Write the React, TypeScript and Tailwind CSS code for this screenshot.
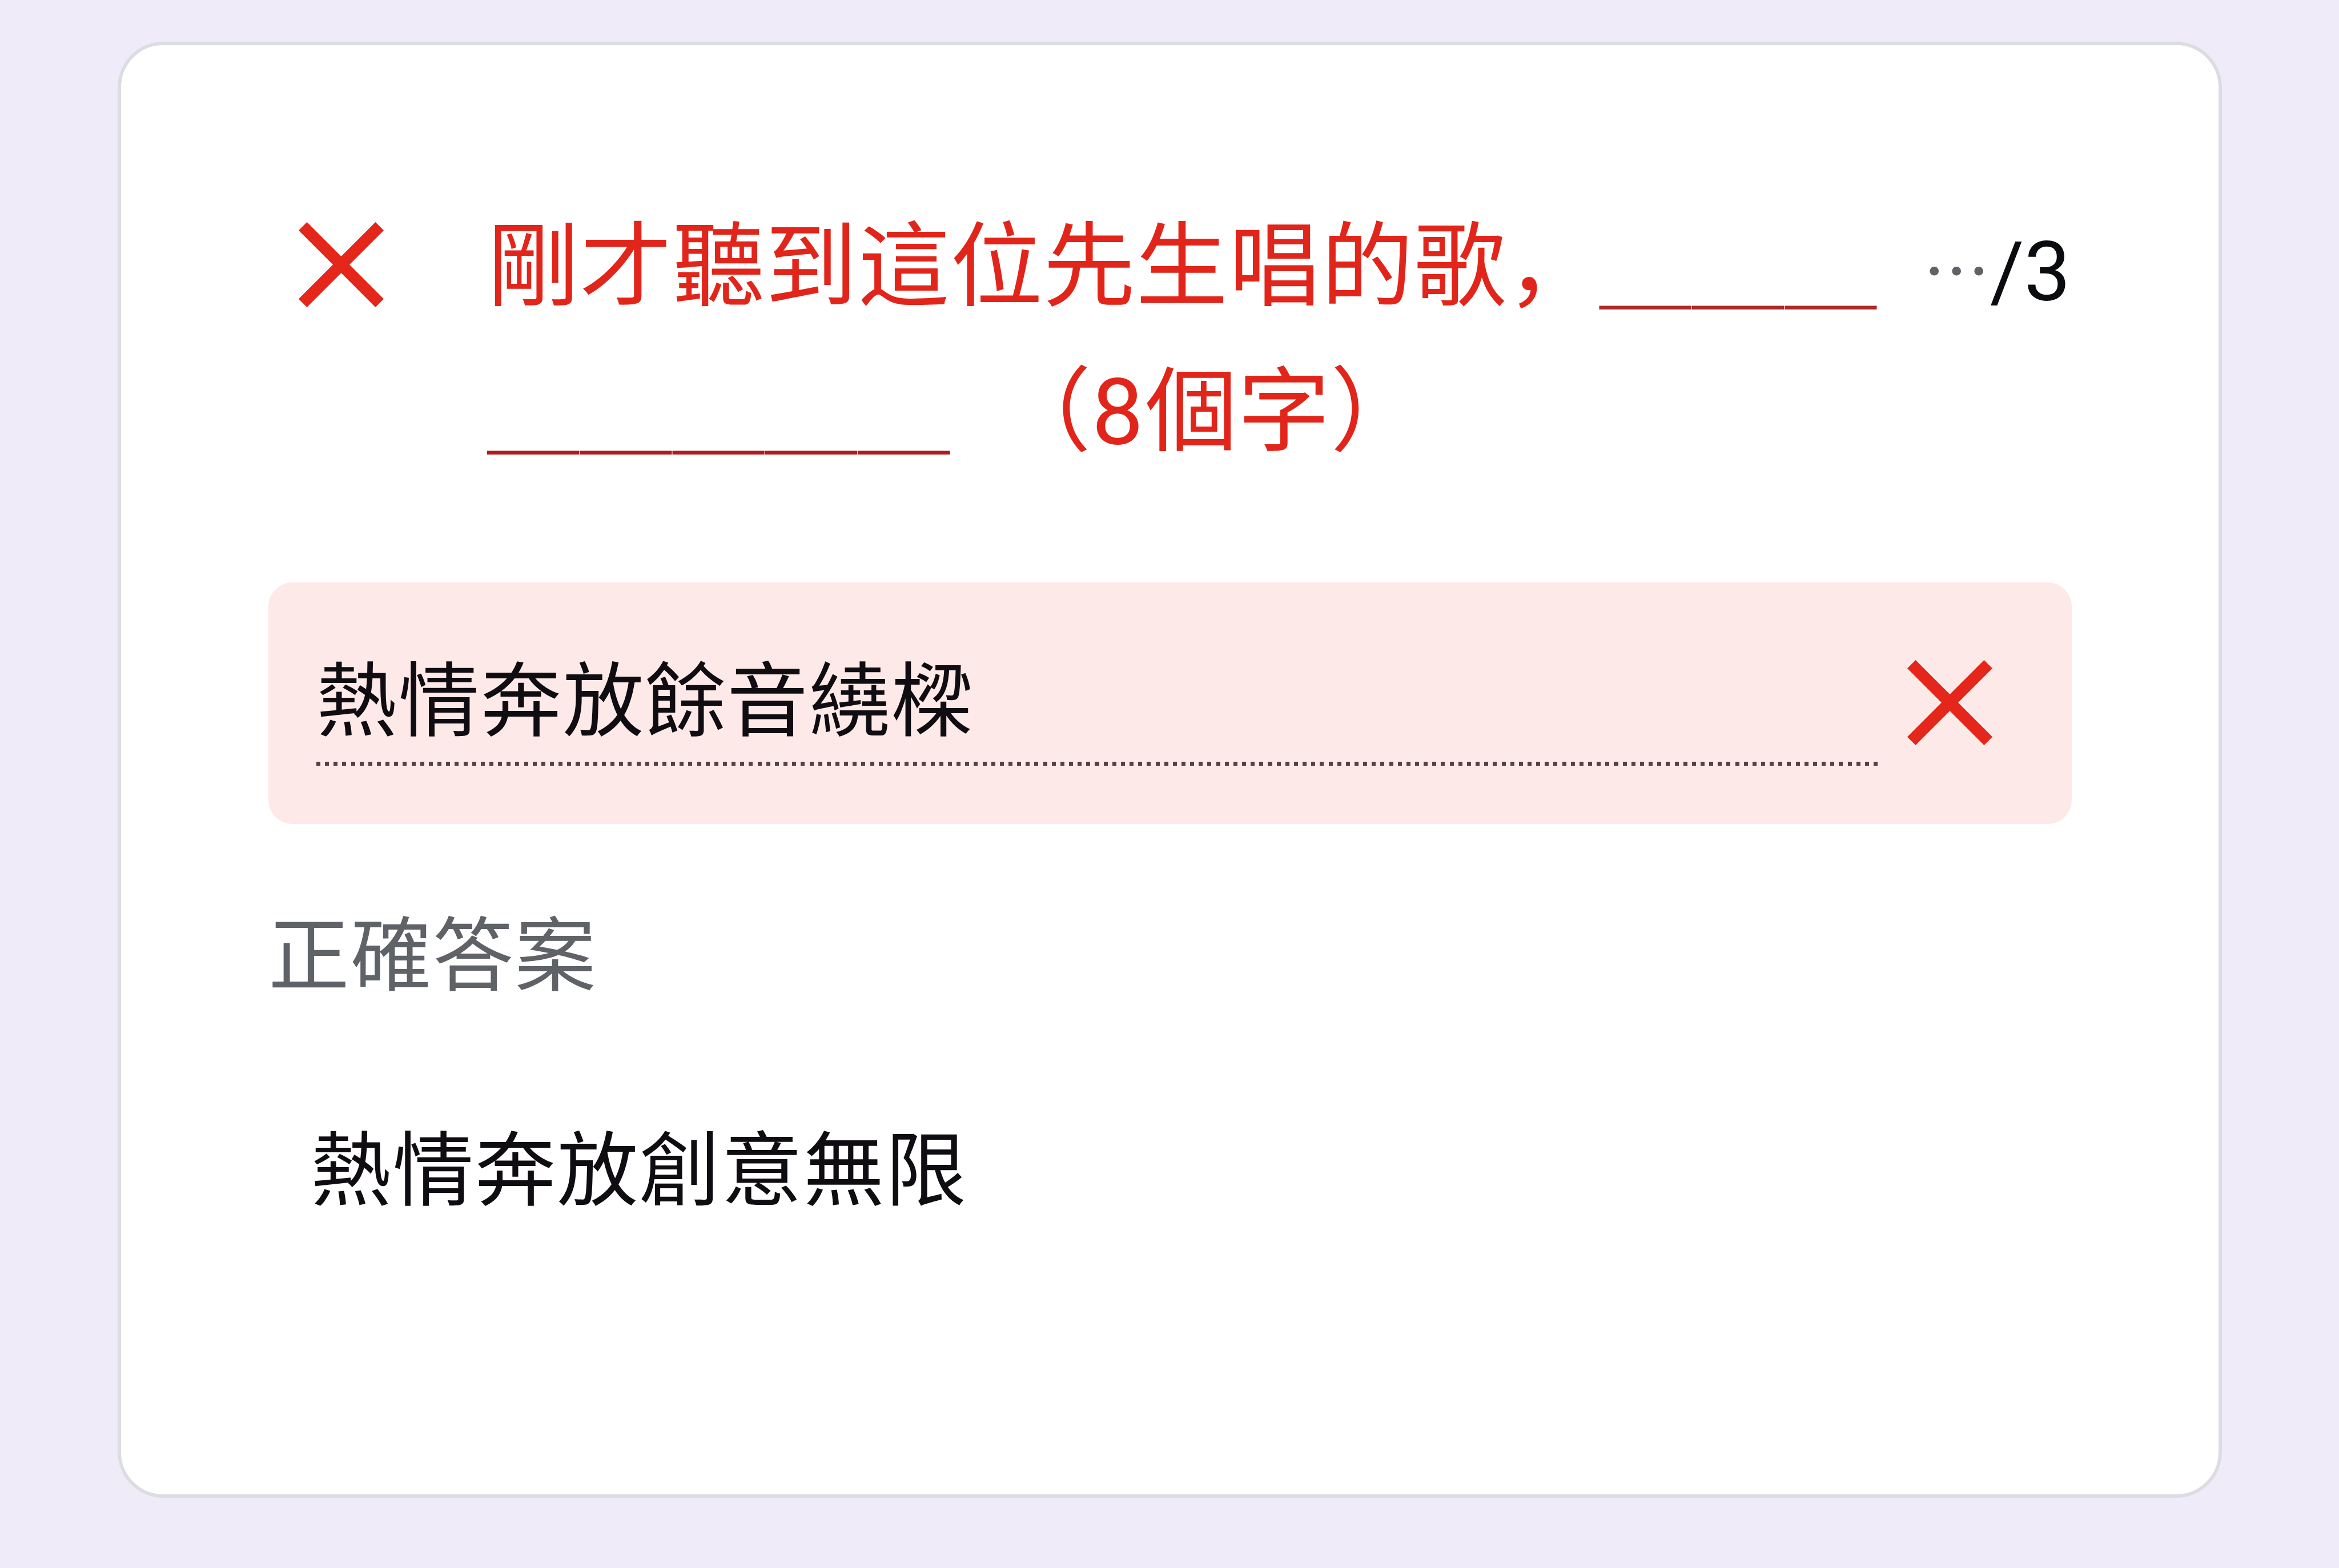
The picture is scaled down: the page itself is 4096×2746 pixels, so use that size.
interface CrossIconProps {
  className?: string;
}

const CrossIcon = ({ className }: CrossIconProps) => (
  <svg viewBox="0 0 148 148" className={className} fill="none" aria-hidden="true">
    <path d="M7.2 7.2L140.8 140.8M140.8 7.2L7.2 140.8" stroke="#e5261b" strokeWidth="20.5" />
  </svg>
);

const question = {
  firstLine: "剛才聽到這位先生唱的歌，",
  limit: "8",
  score: "3",
  response: "熱情奔放餘音繞樑",
  correctLabel: "正確答案",
  correctAnswer: "熱情奔放創意無限",
};

export default function App() {
  return (
    <div
      lang="zh"
      className="flex h-[2746px] w-[4096px] items-start bg-[#efebf8] pt-[73px] pl-[206px] font-[Roboto,'Noto_Sans_CJK_SC',sans-serif]"
    >
      <div className="h-[2550px] w-[3685px] shrink-0 rounded-[80px] border-[6px] border-[#dcdde2] bg-white pt-[260px] pl-[258px]">
        {/* Question title */}
        <div className="flex h-[508px] w-[3158px] items-start">
          <CrossIcon className="mt-[50px] ml-[53px] size-[149px] shrink-0" />
          <h1 className="mt-[2px] ml-[181px] shrink-0 text-[161.3px] leading-[254px] tracking-[1px] whitespace-pre text-[#e2251a]">
            {question.firstLine}
            <span className="text-[#aa2a28]">＿＿＿</span>
            <br />
            <span className="mr-[3px] text-[#b5191a]">＿＿＿＿＿</span>
            {"  （"}
            <span className="mr-[2px]">{question.limit}</span>
            個字）
          </h1>
          <div className="mt-[16px] mr-[2px] ml-auto flex shrink-0 items-baseline leading-[240px]">
            <span className="-translate-y-[7px] font-['Noto_Sans_CJK_SC',sans-serif] text-[117px] text-[#5f6368]">
              …
            </span>
            <span className="text-[145px] text-[#0b0c10]">/{question.score}</span>
          </div>
        </div>

        {/* Submitted response */}
        <div className="mt-[173px] flex h-[423px] w-[3158px] items-start rounded-[42px] bg-[#fde9e7] pt-[110px] pl-[84px]">
          <div className="w-[2734px] shrink-0">
            <p className="h-[204px] text-[141.8px] leading-[200px] tracking-[2px] whitespace-nowrap text-[#100d12]">
              {question.response}
            </p>
            <div className="h-[7px] bg-[repeating-linear-gradient(90deg,#554046_0_7px,transparent_7px_15.15px)]" />
          </div>
          <CrossIcon className="mt-[26px] ml-[52px] size-[149px] shrink-0" />
        </div>

        {/* Correct answer */}
        <p className="mt-[133px] text-[141.8px] leading-[200px] tracking-[2px] text-[#5f6368]">
          {question.correctLabel}
        </p>
        <p className="mt-[176px] pl-[74px] text-[141.8px] leading-[200px] tracking-[2px] text-[#100d12]">
          {question.correctAnswer}
        </p>
      </div>
    </div>
  );
}
